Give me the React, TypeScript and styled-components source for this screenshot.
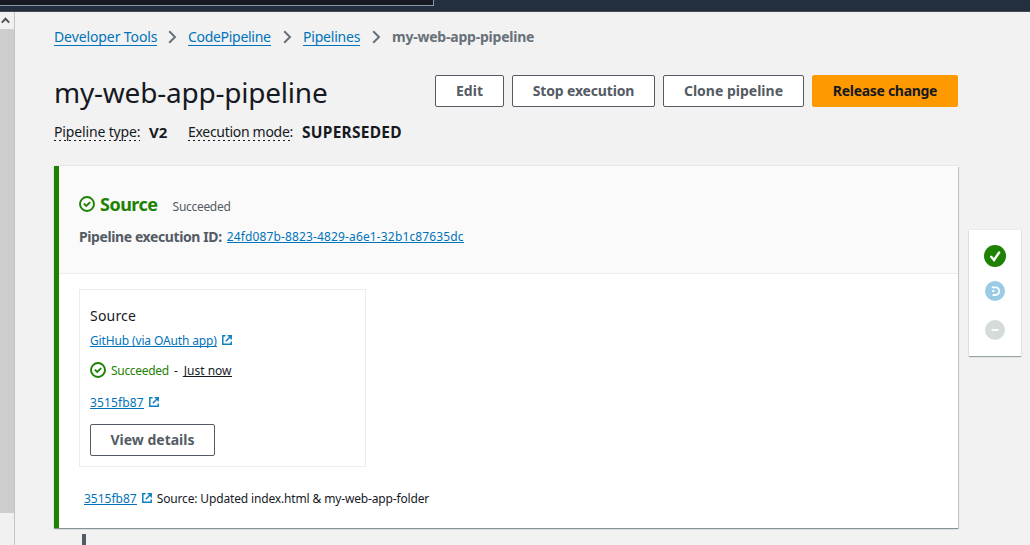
import React from 'react';
import styled, { createGlobalStyle, css } from 'styled-components';

const GlobalStyle = createGlobalStyle`
  * { box-sizing: border-box; }
  html, body { margin: 0; padding: 0; overflow: hidden; }
  body {
    font-family: "Noto Sans", "Open Sans", sans-serif;
    font-size: 14px;
    color: #16191f;
    background: #f2f2f2;
  }
`;

const Page = styled.div`
  width: 1030px;
  height: 545px;
  display: flex;
  flex-direction: column;
  overflow: hidden;
`;

const TopBar = styled.header`
  height: 12px;
  flex: none;
  background: #232f3e;
  border-bottom: 1px solid #414b58;
`;

const SearchEdge = styled.div`
  width: 434px;
  height: 6px;
  background: #16191f;
  border-right: 1px solid #8d99a8;
  border-bottom: 1px solid #8d99a8;
`;

const Body = styled.div`
  flex: 1;
  min-height: 0;
  display: flex;
`;

const ScrollTrack = styled.aside`
  width: 15px;
  flex: none;
  display: flex;
  flex-direction: column;
  background: #f1f1f1;
  border-right: 1px solid #c4c4c4;
`;

const ScrollArrow = styled.div`
  height: 17px;
  display: flex;
  justify-content: center;
  align-items: center;
  padding-right: 3px;
`;

const ScrollThumb = styled.div`
  height: 484px;
  background: #cdcdcd;
`;

const Main = styled.main`
  width: 904px;
  margin-left: 39px;
  flex: none;
`;

type TextProps = { $size?: number; $gap?: number; $color?: string; $bold?: boolean };

const textStyle = css<TextProps>`
  font-size: ${p => p.$size ?? 14}px;
  letter-spacing: ${p => p.$gap ?? 0}px;
  color: ${p => p.$color ?? '#16191f'};
  font-weight: ${p => (p.$bold ? 700 : 400)};
  white-space: nowrap;
`;

const Text = styled.span<TextProps>`${textStyle}`;

const Link = styled.a<TextProps>`
  ${textStyle}
  color: ${p => p.$color ?? '#0073bb'};
  line-height: 16px;
  border-bottom: 1px solid currentColor;
`;

const SmallLink = styled(Link)`
  font-size: 12px;
  line-height: 11px;
  margin-top: 2px;
`;

const CurrentCrumb = styled(Text)`
  margin-bottom: 2px;
`;

const StageStatus = styled(Text)`
  margin: 4px 0 0 10px;
`;

const Breadcrumbs = styled.nav`
  display: flex;
  align-items: center;
  height: 20px;
  margin-top: 15px;
`;

const Crumb = styled.div<{ $width: number }>`
  width: ${p => p.$width}px;
  display: flex;
  align-items: center;
  justify-content: space-between;
  padding-right: 11px;
`;

const TitleRow = styled.div`
  display: flex;
  justify-content: space-between;
  height: 32px;
  margin-top: 28px;
`;

const Title = styled.h1`
  margin: 1px 0 0;
  font-size: 28px;
  line-height: 32px;
  font-weight: 400;
  letter-spacing: -0.22px;
  white-space: nowrap;
`;

const Actions = styled.div`
  display: flex;
  gap: 8px;
`;

const Button = styled.button<{ $width: number; $gap?: number; $primary?: boolean }>`
  width: ${p => p.$width}px;
  height: 32px;
  padding: 0;
  border: 1px solid ${p => (p.$primary ? '#ff9900' : '#545b64')};
  border-radius: 2px;
  background: ${p => (p.$primary ? '#ff9900' : '#fff')};
  color: ${p => (p.$primary ? '#16191f' : '#545b64')};
  font: 700 14px/20px "Noto Sans", "Open Sans", sans-serif;
  letter-spacing: ${p => p.$gap ?? 0}px;
  white-space: nowrap;
`;

const MetaRow = styled.div`
  display: flex;
  align-items: center;
  height: 20px;
  margin-top: 15px;
`;

const MetaLabel = styled.span<TextProps & { $width: number }>`
  ${textStyle}
  width: ${p => p.$width}px;
  height: 17px;
  line-height: 16px;
  margin-right: 9px;
  background: repeating-linear-gradient(90deg, #16191f 0 2px, transparent 2px 5px) left bottom / 100% 1px no-repeat;
`;

const MetaValue = styled.span<TextProps & { $width: number }>`
  ${textStyle}
  width: ${p => p.$width}px;
`;

const Stage = styled.section`
  height: 362px;
  margin-top: 24px;
  border-left: 5px solid #1d8102;
  background: #fff;
  box-shadow: 0 1px 1px 0 rgba(0, 28, 36, 0.35), 1px 1px 1px 0 rgba(0, 28, 36, 0.15), 0 -1px 0 0 #e6e8e8;
`;

const StageHeader = styled.div`
  height: 108px;
  padding: 26px 20px 0;
  background: #fafafa;
  border-bottom: 1px solid #eaeded;
`;

const Row = styled.div<{ $height?: number; $top?: number; $gap?: number; $indent?: number }>`
  display: flex;
  align-items: center;
  height: ${p => p.$height ?? 20}px;
  margin-top: ${p => p.$top ?? 0}px;
  padding-left: ${p => p.$indent ?? 0}px;
  gap: ${p => p.$gap ?? 5}px;
`;

const StageBody = styled.div`
  padding: 15px 20px 0;
`;

const ActionCard = styled.article`
  width: 287px;
  height: 178px;
  padding: 15px 10px 0;
  border: 1px solid #eaeded;
`;

const Connector = styled.div`
  width: 4px;
  height: 12px;
  margin: 6px 0 0 28px;
  background: #545b64;
`;

const StatusRail = styled.aside`
  width: 52px;
  height: 126px;
  margin: 218px 0 0 11px;
  padding-top: 15px;
  display: flex;
  flex-direction: column;
  align-items: center;
  background: #fff;
  box-shadow: 0 1px 1px 0 rgba(0, 28, 36, 0.35), 0 0 1px 0 rgba(0, 28, 36, 0.2);
`;

const Dot = styled.div<{ $size: number; $color: string; $top?: number }>`
  width: ${p => p.$size}px;
  height: ${p => p.$size}px;
  margin-top: ${p => p.$top ?? 0}px;
  border-radius: 50%;
  background: ${p => p.$color};
  display: flex;
  svg { width: 100%; height: 100%; }
`;

const ExternalIcon = styled.svg`
  flex: none;
  margin-bottom: 1px;
`;

const CheckCircle = () => (
  <svg width="16" height="16" viewBox="0 0 16 16" fill="none" stroke="#1d8102" strokeWidth="1.9">
    <circle cx="8" cy="8" r="7" />
    <path d="M4.8 7.6 7.3 10 11.2 6.1" />
  </svg>
);

const External = () => (
  <ExternalIcon width="10" height="10" viewBox="0 0 10 10" fill="none" stroke="#0f82bd" strokeWidth="1.5">
    <path d="M3.6 .8H.8v8.4h8.4V6.4M5.6 .8h3.6v3.6M9 1 3.8 6.2" />
  </ExternalIcon>
);

const Chevron = () => (
  <svg width="9" height="14" viewBox="0 0 9 14" fill="none" stroke="#687078" strokeWidth="2">
    <path d="M1.2 1.2 7 7 1.2 12.8" />
  </svg>
);

export default function App() {
  return (
    <Page>
      <GlobalStyle />
      <TopBar><SearchEdge /></TopBar>
      <Body>
        <ScrollTrack>
          <ScrollArrow>
            <svg width="9" height="7" viewBox="0 0 9 7" fill="none" stroke="#505050" strokeWidth="2">
              <path d="M.8 5.6 4.5 1.8 8.2 5.6" />
            </svg>
          </ScrollArrow>
          <ScrollThumb />
        </ScrollTrack>
        <Main>
          <Breadcrumbs>
            <Crumb $width={134}><Link $gap={-0.1}>Developer Tools</Link><Chevron /></Crumb>
            <Crumb $width={115}><Link $gap={-0.3}>CodePipeline</Link><Chevron /></Crumb>
            <Crumb $width={89}><Link $gap={-0.2}>Pipelines</Link><Chevron /></Crumb>
            <CurrentCrumb $bold $gap={-0.22} $color="#687078">my-web-app-pipeline</CurrentCrumb>
          </Breadcrumbs>
          <TitleRow>
            <Title>my-web-app-pipeline</Title>
            <Actions>
              <Button $width={69}>Edit</Button>
              <Button $width={143} $gap={-0.15}>Stop execution</Button>
              <Button $width={141}>Clone pipeline</Button>
              <Button $width={146} $gap={-0.3} $primary>Release change</Button>
            </Actions>
          </TitleRow>
          <MetaRow>
            <MetaLabel $width={86} $gap={-0.15}>Pipeline type:</MetaLabel>
            <MetaValue $width={39} $bold $size={15}>V2</MetaValue>
            <MetaLabel $width={105} $gap={-0.3}>Execution mode:</MetaLabel>
            <MetaValue $width={101} $bold $size={15.5} $gap={0.25}>SUPERSEDED</MetaValue>
          </MetaRow>
          <Stage>
            <StageHeader>
              <Row $height={24}>
                <CheckCircle />
                <Text $bold $size={18} $gap={-0.5} $color="#1d8102">Source</Text>
                <StageStatus $size={12} $gap={-0.3} $color="#545b64">Succeeded</StageStatus>
              </Row>
              <Row $top={10}>
                <Text $bold $gap={-0.4} $color="#545b64">Pipeline execution ID:</Text>
                <SmallLink $gap={0.14}>24fd087b-8823-4829-a6e1-32b1c87635dc</SmallLink>
              </Row>
            </StageHeader>
            <StageBody>
              <ActionCard>
                <Row><Text $gap={0.2}>Source</Text></Row>
                <Row $top={5}><SmallLink $gap={-0.14}>GitHub (via OAuth app)</SmallLink><External /></Row>
                <Row $top={10}>
                  <CheckCircle />
                  <Text $size={12} $gap={-0.3} $color="#1d8102">Succeeded</Text>
                  <Text $size={12} $gap={1}>-</Text>
                  <SmallLink $color="#16191f">Just now</SmallLink>
                </Row>
                <Row $top={12}><SmallLink $gap={0.14}>3515fb87</SmallLink><External /></Row>
                <Row $height={32} $top={12}><Button $width={125}>View details</Button></Row>
              </ActionCard>
              <Row $top={21} $indent={5}>
                <SmallLink>3515fb87</SmallLink>
                <External />
                <Text $size={12} $gap={-0.15}>Source: Updated index.html &amp; my-web-app-folder</Text>
              </Row>
            </StageBody>
          </Stage>
          <Connector />
        </Main>
        <StatusRail>
          <Dot $size={22} $color="#1d8102">
            <svg viewBox="0 0 22 22" fill="none" stroke="#fff" strokeWidth="2.4" strokeLinecap="round"><path d="M7.2 11.8 10 15 15.2 7.4" /></svg>
          </Dot>
          <Dot $size={20} $top={14} $color="#99cbe4">
            <svg viewBox="0 0 20 20" fill="none" stroke="#fff" strokeWidth="1.8"><path d="M6.8 6.4h3.7a3.8 3.8 0 0 1 0 7.6H7.6M7 10.2h2.6" /></svg>
          </Dot>
          <Dot $size={20} $top={19} $color="#d5dbdb">
            <svg viewBox="0 0 20 20" fill="none" stroke="#fff" strokeWidth="1.8"><path d="M6.5 10h7" /></svg>
          </Dot>
        </StatusRail>
      </Body>
    </Page>
  );
}
